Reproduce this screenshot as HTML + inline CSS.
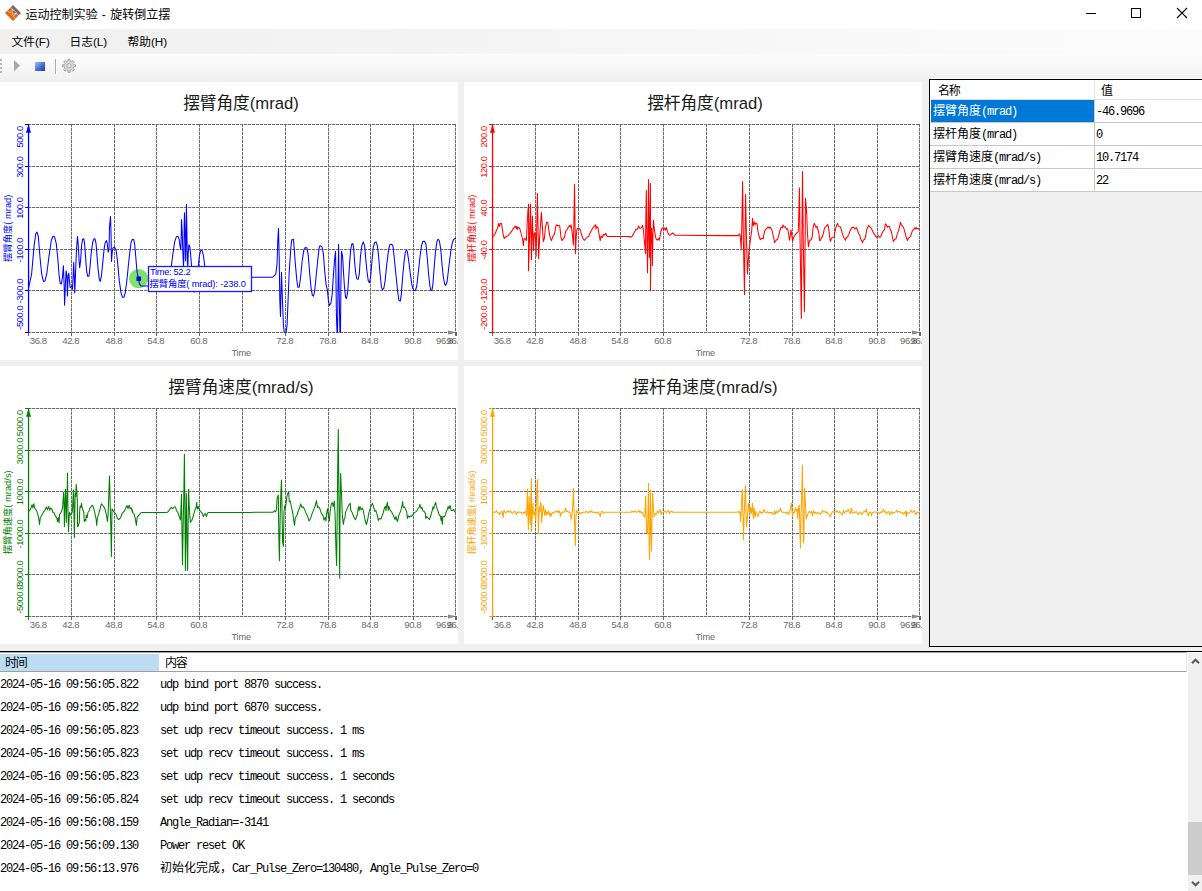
<!DOCTYPE html><html lang="zh-CN"><head><meta charset="utf-8"><title>运动控制实验 - 旋转倒立摆</title><style>
*{margin:0;padding:0;box-sizing:border-box}
html,body{width:1202px;height:891px;overflow:hidden;background:#f0f0f0;font-family:"Liberation Sans","Noto Sans CJK SC",sans-serif;font-size:12px;color:#000}
.abs{position:absolute}
#title{left:0;top:0;width:1202px;height:29px;background:#fff}
#title .t{left:25.5px;top:6.5px;font-size:12px;line-height:17px;white-space:nowrap;word-spacing:1px}
#menu{left:0;top:29px;width:1202px;height:25px;background:linear-gradient(to right,#f0f0f0,#f2f2f2 20%,#fcfcfc)}
#menu span{position:absolute;top:4px;margin-left:-0.5px;line-height:17px;font-size:11.7px;white-space:nowrap}
#tool{left:0;top:54px;width:1202px;height:26px;background:linear-gradient(#fdfdfd,#f9f9f9 35%,#f0f0f0)}
.chart{width:458px;height:278px;background:#fff;overflow:hidden}
.chart svg{position:absolute;left:0;top:0}
#right{left:929px;top:79px;width:280px;height:568px;border:1px solid #000;background:#f0f0f0}
.sim{font-family:"Liberation Mono","Noto Sans CJK SC",monospace;font-size:12px;letter-spacing:-1.2px;white-space:nowrap}
.sim .c{letter-spacing:0}
#rhead{left:0;top:0;width:280px;height:20px;background:#fff;border-bottom:1px solid #e0e0e0}
.rrow{left:0;width:280px;height:23px;background:#fff;border-bottom:1px solid #c8c8c8}
.rrow .a{position:absolute;left:1px;top:0;width:163px;height:22px;padding-left:2px;line-height:24px;overflow:hidden}
.rrow .b{position:absolute;left:166px;top:0;line-height:24px}
.rrow .v{position:absolute;left:164px;top:0;width:1px;height:23px;background:#c8c8c8}
#log{left:0;top:651px;width:1202px;height:240px;background:#fff;border-top:1px solid #000}
#lhead{left:0;top:0;width:1187px;height:20px;background:#fff;border-bottom:1px solid #a0a0a0;border-top:1px solid #a6a6a6;border-right:1px solid #e5e5e5}
.lrow{left:0;height:23px;line-height:23px}
.lrow span.t1{position:absolute;left:0px}
.lrow span.t2{position:absolute;left:160px}
#sb{left:1188px;top:1px;width:14px;height:239px;background:#f0f0f0}
</style></head><body>
<div id="title" class="abs">
<svg class="abs" style="left:0;top:0" width="26" height="26" viewBox="0 0 26 26">
<g transform="translate(13,13) rotate(45)">
<rect x="-5.66" y="-5.66" width="11.32" height="3.3" fill="#6e6e6e"/>
<rect x="-5.66" y="2.4" width="11.32" height="3.26" fill="#ea640c"/>
<rect x="-5.66" y="-2.1" width="3" height="4.1" fill="#ea640c"/>
<rect x="2.7" y="-2.1" width="2.96" height="4.1" fill="#ea640c"/>
<rect x="-2.2" y="-2.4" width="4.4" height="4.9" fill="#ea640c"/>
<path d="M-2.3 -2.5 H2.3 L0.3 1.8Z" fill="#6e6e6e" stroke="#e8f0f8" stroke-width=".5"/>
</g>
</svg>
<span class="abs t">运动控制实验 - 旋转倒立摆</span>
<svg class="abs" style="left:1080px;top:0" width="122" height="29" viewBox="0 0 122 29">
<path d="M6 13.5H16" stroke="#000" stroke-width="1" shape-rendering="crispEdges"/>
<rect x="51.5" y="8.5" width="9" height="9" fill="none" stroke="#000" stroke-width="1" shape-rendering="crispEdges"/>
<path d="M97 8L107 18M107 8L97 18" stroke="#000" stroke-width="1.1"/>
</svg>
</div>
<div id="menu" class="abs"><span style="left:12px">文件(F)</span><span style="left:70px">日志(L)</span><span style="left:128px">帮助(H)</span></div>
<div id="tool" class="abs">
<svg class="abs" style="left:0;top:0" width="90" height="26" viewBox="0 0 90 26">
<path d="M0 5h2v2H0zM0 9h2v2H0zM0 13h2v2H0zM0 17h2v2H0z" fill="#b5b5b5"/>
<path d="M14 6 L20 11.5 L14 17.5Z" fill="#a9a9a9"/>
<defs><linearGradient id="sq" x1="0" y1="0" x2="1" y2="1"><stop offset="0" stop-color="#a8c0f0"/><stop offset="0.6" stop-color="#3f66d0"/><stop offset="1" stop-color="#1d3fa8"/></linearGradient></defs>
<rect x="35" y="8" width="10" height="9" fill="url(#sq)"/>
<path d="M55.5 5V20" stroke="#adadad" stroke-width="1" shape-rendering="crispEdges"/><path d="M56.5 5V20" stroke="#fff" stroke-width="1" shape-rendering="crispEdges"/>
<g transform="translate(69,11.8)"><path d="M-1.11 -4.46 L-1.03 -6.52 L1.03 -6.52 L1.11 -4.46 L2.37 -3.94 L3.88 -5.34 L5.34 -3.88 L3.94 -2.37 L4.46 -1.11 L6.52 -1.03 L6.52 1.03 L4.46 1.11 L3.94 2.37 L5.34 3.88 L3.88 5.34 L2.37 3.94 L1.11 4.46 L1.03 6.52 L-1.03 6.52 L-1.11 4.46 L-2.37 3.94 L-3.88 5.34 L-5.34 3.88 L-3.94 2.37 L-4.46 1.11 L-6.52 1.03 L-6.52 -1.03 L-4.46 -1.11 L-3.94 -2.37 L-5.34 -3.88 L-3.88 -5.34 L-2.37 -3.94Z" fill="#dcdcdc" stroke="#a4a4a4" stroke-width="1" stroke-linejoin="round"/><circle r="2.2" fill="#e6e6e6" stroke="#a8a8a8" stroke-width="1"/></g>
</svg></div>
<div class="abs chart" style="left:0px;top:82px"><svg width="458" height="278" viewBox="0 0 458 278" font-family='Liberation Sans, Noto Sans CJK SC, sans-serif'>
<path d="M71.5 42 V251 M114.5 42 V251 M156.5 42 V251 M199.5 42 V251 M242.5 42 V251 M285.5 42 V251 M328.5 42 V251 M370.5 42 V251 M413.5 42 V251 M455.5 42 V251 M28 42.5 H456 M28 84.5 H456 M28 125.5 H456 M28 167.5 H456 M28 208.5 H456 M28 250.5 H456" stroke="#d4d4d4" stroke-width="1" fill="none" shape-rendering="crispEdges"/>
<path d="M71.5 42 V251 M114.5 42 V251 M156.5 42 V251 M199.5 42 V251 M242.5 42 V251 M285.5 42 V251 M328.5 42 V251 M370.5 42 V251 M413.5 42 V251 M455.5 42 V251 M28 42.5 H456 M28 84.5 H456 M28 125.5 H456 M28 167.5 H456 M28 208.5 H456 M28 250.5 H456" stroke="#6c6c6c" stroke-width="1" stroke-dasharray="3 1" fill="none" shape-rendering="crispEdges"/>
<path d="M28.5 250 V254 M71.5 250 V254 M114.5 250 V254 M156.5 250 V254 M199.5 250 V254 M285.5 250 V254 M328.5 250 V254 M370.5 250 V254 M413.5 250 V254 M455.5 250 V254" stroke="#666" stroke-width="1" fill="none" shape-rendering="crispEdges"/>
<path d="M448 248.4V252.6L450.6 252L454.6 251V250L450.6 249Z" fill="#8a8a8a"/><path d="M456.5 250V254" stroke="#666" stroke-width="1"/>
<circle cx="138.6" cy="196.6" r="9.6" fill="#7ee36b"/>
<polyline points="28.5,206.5 31.6,192.2 34.1,163.6 35.8,151.8 37.0,150.1 38.3,154.3 40.0,175.3 41.7,192.2 43.4,199.4 45.0,198.9 46.7,192.2 49.3,172.0 51.3,158.5 53.0,154.3 54.6,154.8 56.3,161.9 57.7,175.3 59.0,192.2 60.2,201.4 61.4,201.9 62.4,195.5 63.4,183.8 64.1,202.3 64.6,223.3 65.4,202.3 66.1,188.8 66.8,192.2 67.4,214.1 68.1,193.9 68.8,191.3 69.5,198.9 70.1,205.6 71.1,204.8 72.0,204.0 72.5,207.3 73.2,192.2 73.7,180.4 74.3,195.5 74.8,211.0 75.5,192.2 76.5,166.9 77.5,154.6 78.2,161.9 79.1,178.7 79.7,185.8 80.6,178.7 81.6,163.6 82.6,157.2 83.8,156.8 84.6,161.9 85.6,175.3 86.6,188.8 87.6,194.2 89.0,194.2 90.0,185.4 91.3,170.3 92.7,160.2 94.0,156.8 95.0,156.8 96.1,161.9 97.1,175.3 98.1,187.1 99.4,198.1 100.4,199.2 101.4,193.9 102.8,180.4 104.1,166.9 105.1,161.0 106.5,158.5 107.3,161.9 108.2,170.3 109.0,166.9 109.5,145.0 110.5,134.6 111.0,150.1 111.5,179.5 112.2,170.3 112.9,166.1 114.1,165.2 115.2,166.1 116.3,169.4 117.6,180.4 119.3,198.9 121.0,210.7 122.3,215.2 124.0,215.2 125.3,210.7 127.0,197.2 129.2,175.3 131.1,160.2 132.4,157.3 133.8,157.7 134.8,163.6 136.1,178.7 137.1,190.5 138.5,196.4 139.3,201.4 140.9,204.0 148.2,204.0 156.9,204.0 163.7,202.3 167.9,195.5 171.2,184.6 172.9,172.0 174.6,160.2 176.3,154.8 178.0,154.3 179.2,157.7 180.2,165.2 180.8,167.8 181.3,150.1 181.5,137.5 182.2,150.1 182.9,172.0 183.5,184.6 183.9,175.3 184.2,141.7 184.5,130.7 185.1,150.1 185.6,178.7 186.1,158.5 186.4,122.3 186.9,150.1 187.4,180.4 187.9,184.6 188.2,172.0 188.9,162.7 189.8,164.4 190.6,172.0 191.6,184.6 193.0,204.0 194.0,210.2 195.3,204.0 198.2,184.6 199.4,173.7 200.7,168.6 202.1,168.3 203.4,173.7 204.9,184.6 206.6,195.5 209.1,200.6 251.7,195.2 272.8,195.2 275.8,192.2 277.0,182.1 277.8,158.5 278.5,146.4 279.2,175.3 279.8,217.4 280.5,234.6 281.0,209.0 281.5,190.2 282.4,217.4 283.4,242.7 284.2,250.3 286.2,250.3 287.1,242.7 288.1,217.4 289.1,192.2 290.5,170.3 291.6,158.0 293.5,157.3 294.2,166.9 295.5,183.8 296.9,198.9 297.9,205.3 299.2,205.3 300.6,195.5 302.2,178.7 303.9,167.8 305.3,165.6 307.0,166.1 308.3,173.7 309.6,190.5 311.0,205.6 312.3,213.2 313.5,214.1 314.7,209.0 316.0,195.5 317.7,178.7 319.1,166.1 320.0,163.6 322.0,164.9 323.4,171.7 324.7,189.2 326.1,202.6 327.4,208.0 328.4,218.8 329.4,223.5 330.8,221.5 332.1,213.4 333.5,191.9 334.5,178.4 335.5,169.2 335.9,191.9 336.4,232.3 337.0,250.1 337.5,250.1 338.0,205.3 338.6,162.2 339.1,205.3 339.9,250.1 340.5,250.1 340.9,205.3 341.5,169.2 342.6,174.4 343.6,191.9 344.5,205.3 345.6,215.4 346.4,216.5 347.6,210.7 348.6,197.3 349.6,181.1 350.7,167.6 351.8,162.0 352.9,161.6 353.7,166.3 354.7,181.1 355.8,191.9 356.9,197.0 358.2,197.3 359.3,191.9 360.5,173.7 361.9,163.6 363.2,159.9 364.6,163.6 365.6,175.3 366.9,188.8 368.3,198.9 369.5,200.6 370.6,195.5 372.0,178.7 373.3,165.2 374.7,160.5 376.0,159.9 377.4,163.6 378.7,175.3 380.1,192.2 381.4,204.8 382.4,207.7 383.8,206.5 385.1,198.9 386.8,182.1 388.5,168.6 389.8,162.7 391.5,162.2 392.9,163.6 394.2,175.3 395.9,192.2 397.6,209.0 398.9,218.3 400.3,219.1 401.3,212.4 402.6,195.5 404.0,180.4 405.3,170.3 406.3,168.1 407.3,169.4 408.7,178.7 410.4,192.2 412.1,204.0 413.7,208.5 415.4,208.5 416.8,204.0 418.5,188.8 420.1,173.7 421.5,163.6 422.8,159.5 424.5,159.2 425.9,161.9 427.2,175.3 428.6,192.2 429.9,204.0 430.9,208.5 431.9,208.5 432.9,202.3 434.3,183.8 435.6,168.6 437.0,159.3 438.0,157.2 439.3,158.5 440.7,166.9 442.0,182.1 443.4,195.5 444.7,202.3 445.7,203.5 447.1,199.8 448.4,188.8 449.8,177.0 451.1,166.9 452.5,160.2 453.8,157.3 455.2,156.5 455.8,156.8" fill="none" stroke="#0000ff" stroke-width="1.05" stroke-linejoin="round"/>
<path d="M28.55 42V251" stroke="#0000ff" stroke-width="1.3" fill="none"/>
<path d="M25 42.5 H29 M25 84.5 H29 M25 125.5 H29 M25 167.5 H29 M25 208.5 H29 M25 250.5 H29" stroke="#0000ff" stroke-width="1" fill="none" shape-rendering="crispEdges"/>
<path d="M28.5 42.3 L31 50.8 H26Z" fill="#0000ff"/>
<text x="241" y="27.3" font-size="16.67" text-anchor="middle" fill="#1a1a1a">摆臂角度(mrad)</text>
<text x="38.2" y="262" font-size="9.5" text-anchor="middle" fill="#6a6a6a" letter-spacing="-0.4">36.8</text>
<text x="70.7" y="262" font-size="9.5" text-anchor="middle" fill="#6a6a6a" letter-spacing="-0.4">42.8</text>
<text x="113.7" y="262" font-size="9.5" text-anchor="middle" fill="#6a6a6a" letter-spacing="-0.4">48.8</text>
<text x="155.7" y="262" font-size="9.5" text-anchor="middle" fill="#6a6a6a" letter-spacing="-0.4">54.8</text>
<text x="198.7" y="262" font-size="9.5" text-anchor="middle" fill="#6a6a6a" letter-spacing="-0.4">60.8</text>
<text x="284.7" y="262" font-size="9.5" text-anchor="middle" fill="#6a6a6a" letter-spacing="-0.4">72.8</text>
<text x="327.7" y="262" font-size="9.5" text-anchor="middle" fill="#6a6a6a" letter-spacing="-0.4">78.8</text>
<text x="369.7" y="262" font-size="9.5" text-anchor="middle" fill="#6a6a6a" letter-spacing="-0.4">84.8</text>
<text x="412.7" y="262" font-size="9.5" text-anchor="middle" fill="#6a6a6a" letter-spacing="-0.4">90.8</text>
<text x="436" y="262" font-size="9.5" fill="#6a6a6a" letter-spacing="-0.4">96.8</text>
<text x="446.5" y="262" font-size="9.5" fill="#6a6a6a" letter-spacing="-0.4">96.8</text>
<text x="241.2" y="274" font-size="9.33" text-anchor="middle" fill="#6a6a6a" letter-spacing="-0.2">Time</text>
<text transform="translate(22.8,44.2) rotate(-90)" font-size="9.33" text-anchor="end" fill="#0000ff" letter-spacing="-0.4">500.0</text>
<text transform="translate(22.8,85.1) rotate(-90)" font-size="9.33" text-anchor="middle" fill="#0000ff" letter-spacing="-0.4">300.0</text>
<text transform="translate(22.8,126.1) rotate(-90)" font-size="9.33" text-anchor="middle" fill="#0000ff" letter-spacing="-0.4">100.0</text>
<text transform="translate(22.8,168.1) rotate(-90)" font-size="9.33" text-anchor="middle" fill="#0000ff" letter-spacing="-0.4">-100.0</text>
<text transform="translate(22.8,209.1) rotate(-90)" font-size="9.33" text-anchor="middle" fill="#0000ff" letter-spacing="-0.4">-300.0</text>
<text transform="translate(22.8,247.8) rotate(-90)" font-size="9.33" text-anchor="start" fill="#0000ff" letter-spacing="-0.4">-500.0</text>
<text transform="translate(11.4,146.3) rotate(-90)" font-size="9.33" text-anchor="middle" fill="#0000ff">摆臂角度( mrad)</text>
<rect x="136.5" y="194.5" width="4.5" height="4.5" fill="#0000e0"/>
<rect x="148.5" y="184.5" width="103" height="25" fill="#fff" stroke="#1a1aff" stroke-width="1.3"/>
<text x="150" y="192.8" font-size="9.33" fill="#0000ff" letter-spacing="-0.35">Time: 52.2</text>
<text x="149.6" y="204.6" font-size="9.33" fill="#0000ff" letter-spacing="-0.15">摆臂角度( mrad): -238.0</text>
</svg></div>
<div class="abs chart" style="left:464px;top:82px"><svg width="458" height="278" viewBox="0 0 458 278" font-family='Liberation Sans, Noto Sans CJK SC, sans-serif'>
<path d="M71.5 42 V251 M114.5 42 V251 M156.5 42 V251 M199.5 42 V251 M242.5 42 V251 M285.5 42 V251 M328.5 42 V251 M370.5 42 V251 M413.5 42 V251 M455.5 42 V251 M28 42.5 H456 M28 84.5 H456 M28 125.5 H456 M28 167.5 H456 M28 208.5 H456 M28 250.5 H456" stroke="#d4d4d4" stroke-width="1" fill="none" shape-rendering="crispEdges"/>
<path d="M71.5 42 V251 M114.5 42 V251 M156.5 42 V251 M199.5 42 V251 M242.5 42 V251 M285.5 42 V251 M328.5 42 V251 M370.5 42 V251 M413.5 42 V251 M455.5 42 V251 M28 42.5 H456 M28 84.5 H456 M28 125.5 H456 M28 167.5 H456 M28 208.5 H456 M28 250.5 H456" stroke="#6c6c6c" stroke-width="1" stroke-dasharray="3 1" fill="none" shape-rendering="crispEdges"/>
<path d="M28.5 250 V254 M71.5 250 V254 M114.5 250 V254 M156.5 250 V254 M199.5 250 V254 M285.5 250 V254 M328.5 250 V254 M370.5 250 V254 M413.5 250 V254 M455.5 250 V254" stroke="#666" stroke-width="1" fill="none" shape-rendering="crispEdges"/>
<path d="M448 248.4V252.6L450.6 252L454.6 251V250L450.6 249Z" fill="#8a8a8a"/><path d="M456.5 250V254" stroke="#666" stroke-width="1"/>

<polyline points="28.5,155.0 30.7,152.8 32.4,148.6 33.8,145.2 34.6,141.5 35.4,144.4 36.1,141.5 37.5,141.5 38.3,146.9 39.2,152.8 40.3,156.5 41.7,155.0 42.9,154.0 44.2,153.7 45.4,152.0 46.7,150.6 47.9,148.9 49.3,146.6 50.6,144.9 51.8,144.4 53.0,146.9 54.3,145.6 51.0,144.2 52.1,145.7 53.2,147.4 54.1,145.7 55.3,145.7 56.4,148.5 57.5,153.0 58.6,157.5 59.4,163.7 60.0,156.9 60.9,156.4 61.7,157.5 62.4,158.6 63.1,142.9 63.9,129.4 64.6,122.1 64.6,154.1 64.5,188.7 65.6,154.1 66.5,122.1 67.0,154.1 67.5,177.7 67.9,154.1 68.4,134.1 69.0,154.1 69.5,168.7 70.0,156.4 70.3,150.7 71.2,151.9 71.7,160.9 72.1,174.3 72.8,142.9 73.4,111.2 74.0,142.9 74.6,176.6 75.7,154.1 77.4,130.3 78.4,145.1 79.3,159.5 80.4,156.4 81.5,145.1 82.6,140.6 83.8,140.4 84.4,145.1 85.2,150.7 86.4,156.4 87.5,158.6 88.6,155.2 89.7,153.0 90.5,151.9 91.4,146.3 92.3,142.9 93.1,142.7 93.9,144.0 94.8,143.5 95.7,143.8 96.5,150.7 97.0,155.8 98.1,158.6 99.3,156.4 100.4,155.8 101.3,150.7 102.1,148.5 103.2,147.4 104.3,145.1 105.4,143.5 106.3,145.1 107.1,142.9 107.7,147.4 108.5,154.1 109.4,162.9 109.8,142.9 110.3,114.8 110.5,102.3 111.0,138.5 111.5,171.7 112.2,155.3 112.9,146.9 114.9,146.1 116.3,147.8 117.6,152.8 118.9,156.2 120.3,158.4 121.6,157.0 123.3,155.0 124.7,154.5 126.0,151.1 127.4,148.6 128.7,146.1 130.1,144.4 131.7,142.7 132.0,147.1 132.8,144.6 134.0,145.8 135.0,152.2 136.2,158.6 137.1,153.9 138.4,155.5 139.6,152.2 140.8,153.0 141.8,151.3 142.9,154.2 144.6,154.5 165.7,154.5 166.0,155.3 168.2,154.3 170.1,150.7 171.8,147.5 173.6,147.0 174.5,144.1 175.5,146.0 176.5,146.3 177.7,145.1 178.4,143.4 179.4,147.8 180.3,158.0 181.5,171.4 181.7,146.3 182.3,108.4 182.9,153.6 183.5,190.8 184.1,146.3 184.5,97.5 185.0,146.3 185.4,175.5 186.0,131.7 186.4,101.4 186.6,160.9 186.4,208.7 187.0,160.9 187.6,146.3 188.2,163.8 188.4,183.5 188.9,153.6 189.5,138.3 190.2,146.3 191.1,152.1 191.9,156.5 193.1,158.3 194.3,156.5 195.2,158.4 195.9,155.1 196.9,149.2 198.1,146.0 198.9,145.6 199.8,147.8 200.7,146.0 201.6,148.1 202.4,145.6 203.3,149.2 204.5,152.1 205.7,153.3 207.1,152.1 208.6,151.0 209.7,151.8 211.2,153.3 216.0,153.3 261.0,153.6 274.4,153.6 275.5,152.0 276.3,154.3 277.2,167.3 277.8,144.8 278.6,99.4 279.3,154.3 280.5,212.5 281.0,154.3 281.6,112.4 282.4,154.3 283.5,191.9 284.9,169.6 286.4,158.2 287.7,148.6 288.5,136.2 289.2,143.8 290.0,140.0 291.0,142.9 291.9,141.0 293.1,141.9 293.8,148.6 295.0,154.0 296.3,157.8 297.6,156.2 299.2,156.6 300.1,151.5 301.1,148.2 302.6,146.3 304.1,144.8 305.3,146.3 306.4,145.2 307.8,147.7 308.7,151.5 309.7,156.2 310.6,160.4 312.1,158.2 313.7,157.2 314.8,153.4 316.0,148.2 317.1,145.2 318.3,145.7 319.0,142.9 320.2,145.2 321.3,144.8 322.5,147.1 323.6,146.7 324.5,151.5 325.5,158.2 326.3,153.4 327.0,147.7 327.8,153.4 328.6,159.1 329.7,155.3 331.2,152.8 332.8,150.9 334.3,149.6 335.0,125.7 335.4,105.7 336.0,154.3 336.8,202.0 337.3,236.4 337.9,154.3 338.5,89.5 339.2,154.3 340.4,229.7 341.0,173.4 341.5,116.2 342.7,131.4 343.4,150.5 344.4,164.8 345.4,159.1 346.0,158.5 347.2,157.5 348.2,155.0 349.0,146.4 350.2,141.3 351.3,143.4 352.1,145.4 353.1,144.4 354.1,148.4 354.9,151.4 355.6,158.5 356.6,158.3 357.3,155.5 358.3,155.0 359.3,151.4 360.6,145.9 362.2,144.4 363.7,142.5 364.7,146.4 365.7,155.5 366.4,159.5 367.4,156.5 368.4,155.3 370.0,155.0 371.3,148.4 372.5,143.4 373.5,141.3 374.5,144.2 376.1,144.4 377.3,147.4 378.5,152.4 380.1,156.0 381.4,158.3 382.4,155.5 383.6,154.7 384.9,152.4 386.4,147.9 387.9,145.6 389.4,145.2 390.9,146.9 392.3,145.6 393.5,147.9 394.5,151.4 395.7,152.9 396.5,156.5 397.5,158.5 398.5,160.5 399.5,158.0 400.7,157.3 401.8,153.5 402.6,148.4 403.6,145.4 404.6,143.4 405.8,144.9 407.1,145.9 408.6,148.9 410.1,151.9 411.7,154.5 412.9,155.5 414.2,153.5 415.7,155.3 416.7,155.0 417.9,151.4 419.2,148.9 420.5,147.9 421.3,141.8 422.3,142.8 423.3,145.2 424.3,144.2 425.6,144.6 426.3,147.9 427.3,149.4 428.3,154.5 429.3,159.5 430.6,157.5 431.7,157.0 432.4,155.5 433.1,152.4 434.4,149.4 435.4,145.4 436.4,140.3 437.4,142.8 438.4,144.4 439.4,144.9 440.4,148.4 441.5,152.9 442.5,156.0 443.5,158.5 444.5,156.0 445.5,155.5 446.5,154.5 447.5,151.4 448.5,148.4 449.5,147.9 450.5,145.9 451.3,146.9 452.1,145.6 453.1,146.9 454.1,146.4 455.1,147.4 455.6,146.9" fill="none" stroke="#ff0000" stroke-width="1.05" stroke-linejoin="round"/>
<path d="M28.55 42V251" stroke="#ff0000" stroke-width="1.3" fill="none"/>
<path d="M25 42.5 H29 M25 84.5 H29 M25 125.5 H29 M25 167.5 H29 M25 208.5 H29 M25 250.5 H29" stroke="#ff0000" stroke-width="1" fill="none" shape-rendering="crispEdges"/>
<path d="M28.5 42.3 L31 50.8 H26Z" fill="#ff0000"/>
<text x="241" y="27.3" font-size="16.67" text-anchor="middle" fill="#1a1a1a">摆杆角度(mrad)</text>
<text x="38.2" y="262" font-size="9.5" text-anchor="middle" fill="#6a6a6a" letter-spacing="-0.4">36.8</text>
<text x="70.7" y="262" font-size="9.5" text-anchor="middle" fill="#6a6a6a" letter-spacing="-0.4">42.8</text>
<text x="113.7" y="262" font-size="9.5" text-anchor="middle" fill="#6a6a6a" letter-spacing="-0.4">48.8</text>
<text x="155.7" y="262" font-size="9.5" text-anchor="middle" fill="#6a6a6a" letter-spacing="-0.4">54.8</text>
<text x="198.7" y="262" font-size="9.5" text-anchor="middle" fill="#6a6a6a" letter-spacing="-0.4">60.8</text>
<text x="284.7" y="262" font-size="9.5" text-anchor="middle" fill="#6a6a6a" letter-spacing="-0.4">72.8</text>
<text x="327.7" y="262" font-size="9.5" text-anchor="middle" fill="#6a6a6a" letter-spacing="-0.4">78.8</text>
<text x="369.7" y="262" font-size="9.5" text-anchor="middle" fill="#6a6a6a" letter-spacing="-0.4">84.8</text>
<text x="412.7" y="262" font-size="9.5" text-anchor="middle" fill="#6a6a6a" letter-spacing="-0.4">90.8</text>
<text x="436" y="262" font-size="9.5" fill="#6a6a6a" letter-spacing="-0.4">96.8</text>
<text x="446.5" y="262" font-size="9.5" fill="#6a6a6a" letter-spacing="-0.4">96.8</text>
<text x="241.2" y="274" font-size="9.33" text-anchor="middle" fill="#6a6a6a" letter-spacing="-0.2">Time</text>
<text transform="translate(22.8,44.2) rotate(-90)" font-size="9.33" text-anchor="end" fill="#ff0000" letter-spacing="-0.4">200.0</text>
<text transform="translate(22.8,85.1) rotate(-90)" font-size="9.33" text-anchor="middle" fill="#ff0000" letter-spacing="-0.4">120.0</text>
<text transform="translate(22.8,126.1) rotate(-90)" font-size="9.33" text-anchor="middle" fill="#ff0000" letter-spacing="-0.4">40.0</text>
<text transform="translate(22.8,168.1) rotate(-90)" font-size="9.33" text-anchor="middle" fill="#ff0000" letter-spacing="-0.4">-40.0</text>
<text transform="translate(22.8,209.1) rotate(-90)" font-size="9.33" text-anchor="middle" fill="#ff0000" letter-spacing="-0.4">-120.0</text>
<text transform="translate(22.8,247.8) rotate(-90)" font-size="9.33" text-anchor="start" fill="#ff0000" letter-spacing="-0.4">-200.0</text>
<text transform="translate(11.4,146.3) rotate(-90)" font-size="9.33" text-anchor="middle" fill="#ff0000">摆杆角度( mrad)</text>

</svg></div>
<div class="abs chart" style="left:0px;top:366px"><svg width="458" height="278" viewBox="0 0 458 278" font-family='Liberation Sans, Noto Sans CJK SC, sans-serif'>
<path d="M71.5 42 V251 M114.5 42 V251 M156.5 42 V251 M199.5 42 V251 M242.5 42 V251 M285.5 42 V251 M328.5 42 V251 M370.5 42 V251 M413.5 42 V251 M455.5 42 V251 M28 42.5 H456 M28 84.5 H456 M28 125.5 H456 M28 167.5 H456 M28 208.5 H456 M28 250.5 H456" stroke="#d4d4d4" stroke-width="1" fill="none" shape-rendering="crispEdges"/>
<path d="M71.5 42 V251 M114.5 42 V251 M156.5 42 V251 M199.5 42 V251 M242.5 42 V251 M285.5 42 V251 M328.5 42 V251 M370.5 42 V251 M413.5 42 V251 M455.5 42 V251 M28 42.5 H456 M28 84.5 H456 M28 125.5 H456 M28 167.5 H456 M28 208.5 H456 M28 250.5 H456" stroke="#6c6c6c" stroke-width="1" stroke-dasharray="3 1" fill="none" shape-rendering="crispEdges"/>
<path d="M28.5 250 V254 M71.5 250 V254 M114.5 250 V254 M156.5 250 V254 M199.5 250 V254 M285.5 250 V254 M328.5 250 V254 M370.5 250 V254 M413.5 250 V254 M455.5 250 V254" stroke="#666" stroke-width="1" fill="none" shape-rendering="crispEdges"/>
<path d="M448 248.4V252.6L450.6 252L454.6 251V250L450.6 249Z" fill="#8a8a8a"/><path d="M456.5 250V254" stroke="#666" stroke-width="1"/>

<polyline points="28.5,145.4 30.4,143.7 32.1,138.7 32.8,142.0 33.8,137.8 34.8,142.5 36.1,143.7 37.5,147.1 38.5,151.3 39.5,158.4 40.2,152.1 41.7,149.6 43.4,146.2 45.0,144.2 46.4,140.9 47.6,143.7 48.7,140.3 49.8,144.2 50.9,142.0 52.0,143.5 53.0,146.5 54.2,147.0 55.5,150.1 56.8,152.1 57.6,155.6 58.3,151.6 59.1,156.6 59.6,148.5 60.9,146.5 61.9,144.0 62.6,141.5 63.1,134.4 63.6,126.3 64.1,139.5 64.4,160.7 64.9,139.5 65.5,123.3 65.9,139.5 66.3,156.6 66.8,134.4 67.3,119.3 67.5,107.1 67.8,134.4 68.2,154.6 68.5,165.7 69.0,154.6 69.4,146.5 70.2,149.1 71.2,147.5 72.2,146.5 72.7,139.5 73.2,129.4 73.5,124.1 73.9,144.5 74.4,171.8 74.8,144.5 75.2,127.3 75.8,130.4 76.2,118.2 76.8,124.3 77.3,134.4 77.6,160.7 78.5,159.2 79.3,156.6 79.7,144.5 80.1,140.0 80.8,141.5 81.5,137.4 82.1,141.5 82.8,143.5 83.8,146.5 84.3,155.6 85.1,153.6 85.8,154.6 86.3,149.1 87.2,151.6 87.9,146.5 88.9,145.5 89.6,142.5 90.4,141.5 91.4,140.0 92.0,139.3 92.4,139.2 93.4,141.5 94.7,146.2 96.1,153.0 96.7,159.4 97.4,152.1 98.7,147.9 100.1,142.9 101.4,137.8 102.8,139.8 104.1,141.2 105.5,144.6 106.5,149.6 107.5,155.5 108.2,146.2 109.0,122.7 109.5,110.0 110.2,139.5 110.9,164.8 111.4,190.5 111.7,164.8 112.0,142.9 113.2,144.6 114.6,147.1 115.9,147.9 117.3,152.1 118.6,153.8 119.6,152.6 120.8,151.3 121.6,148.3 123.3,146.2 124.7,144.6 126.0,141.5 127.0,139.5 128.0,142.5 129.1,139.2 130.1,142.5 131.4,142.0 132.8,145.4 131.3,142.7 132.5,146.4 134.2,148.1 135.4,153.1 136.4,159.5 137.1,151.4 138.4,149.8 139.8,148.1 140.9,146.7 142.6,146.4 167.0,146.4 168.4,145.5 169.7,143.4 171.4,141.3 172.8,142.7 174.1,141.0 175.5,141.0 176.5,144.7 177.8,146.4 179.2,150.6 180.5,154.0 181.0,141.3 181.5,128.2 182.0,166.6 182.5,198.6 183.2,158.2 183.9,124.5 184.4,88.3 184.9,141.3 185.4,204.5 185.9,158.2 186.4,127.5 186.9,166.6 187.6,204.5 188.1,158.2 188.6,123.3 189.3,141.3 190.3,156.5 191.6,154.8 192.6,152.3 194.0,147.2 195.3,143.0 196.2,141.3 196.7,136.3 197.3,143.0 198.4,140.5 199.4,143.9 200.7,145.5 202.1,147.2 203.4,150.6 204.4,148.1 205.4,147.7 206.4,150.6 207.4,147.2 208.8,146.4 250.0,146.4 255.0,146.3 273.1,146.3 274.4,144.6 275.6,145.9 276.4,143.6 277.1,132.2 278.3,129.3 278.8,168.4 279.4,194.7 280.2,149.3 280.9,126.4 281.5,114.1 282.1,149.3 282.6,176.0 283.4,180.4 284.0,145.5 284.7,139.8 285.5,141.7 286.3,136.0 287.0,130.3 287.8,127.4 288.7,126.1 289.3,136.0 290.3,135.0 291.2,139.8 292.8,147.4 293.7,154.1 294.5,159.4 295.4,151.2 296.6,150.3 298.1,145.5 299.6,141.7 300.8,137.9 301.9,141.7 303.0,140.7 304.6,143.6 306.1,147.4 307.6,150.3 309.1,155.0 310.7,152.2 312.2,147.4 313.7,143.6 315.2,139.8 316.4,134.5 317.5,141.7 318.7,140.7 320.2,143.6 321.3,147.4 322.9,149.3 324.0,154.1 325.2,151.2 325.9,155.0 326.7,147.4 327.4,142.7 328.4,149.3 329.4,155.0 330.1,145.5 331.3,137.9 332.4,136.9 333.2,140.7 334.3,135.0 335.1,149.3 335.8,177.9 336.6,199.5 337.2,149.3 337.7,101.7 338.3,63.2 338.9,130.3 339.7,212.2 340.0,149.3 340.6,107.4 341.6,130.3 342.3,149.3 343.3,158.5 344.2,153.1 345.0,151.5 345.5,146.4 347.0,142.9 348.5,139.4 350.3,137.3 350.6,143.4 352.1,146.4 353.6,150.5 355.3,153.7 356.6,151.0 357.6,147.4 358.4,140.9 359.1,144.4 359.9,140.4 361.0,143.9 362.2,141.9 363.2,144.4 364.2,149.5 365.2,154.5 366.4,158.5 367.7,153.5 369.0,146.4 370.3,142.4 371.5,139.4 372.5,137.3 373.8,141.4 374.8,145.4 375.8,144.4 377.1,148.4 378.3,154.5 379.3,152.5 380.9,153.0 382.2,149.5 383.4,146.4 384.4,141.9 385.4,140.4 385.9,144.4 386.9,138.3 387.4,136.3 388.2,144.4 388.9,140.4 389.9,143.9 391.3,145.4 392.5,147.4 394.0,151.0 395.0,153.5 396.0,150.5 397.3,155.5 398.0,153.5 398.7,149.5 400.1,146.4 401.1,143.4 402.1,139.4 402.6,135.5 403.3,141.4 404.6,140.9 405.6,143.4 406.8,146.4 407.4,152.5 408.1,150.0 409.4,151.0 410.5,150.0 411.7,150.5 412.9,148.4 414.2,146.9 415.7,145.9 416.9,144.9 417.9,142.4 418.9,141.9 419.9,138.3 421.0,142.4 422.0,141.4 423.0,144.9 424.3,145.4 425.3,147.4 425.8,152.5 426.8,150.5 428.0,152.0 429.3,153.5 430.4,151.0 431.4,147.4 432.4,143.9 432.9,140.9 433.7,142.9 434.4,139.9 435.6,136.3 436.4,140.4 437.4,143.4 438.4,146.4 439.4,149.5 440.5,150.0 441.0,154.5 441.5,150.5 442.3,158.5 442.8,150.5 444.5,150.7 445.5,148.4 446.5,145.4 447.5,142.9 448.2,140.4 449.0,142.9 450.1,139.4 451.1,144.4 452.6,144.4 453.6,143.4 454.6,145.4 455.6,146.4" fill="none" stroke="#008000" stroke-width="1.05" stroke-linejoin="round"/>
<path d="M28.55 42V251" stroke="#008000" stroke-width="1.3" fill="none"/>
<path d="M25 42.5 H29 M25 84.5 H29 M25 125.5 H29 M25 167.5 H29 M25 208.5 H29 M25 250.5 H29" stroke="#008000" stroke-width="1" fill="none" shape-rendering="crispEdges"/>
<path d="M28.5 42.3 L31 50.8 H26Z" fill="#008000"/>
<text x="241" y="27.3" font-size="16.67" text-anchor="middle" fill="#1a1a1a">摆臂角速度(mrad/s)</text>
<text x="38.2" y="262" font-size="9.5" text-anchor="middle" fill="#6a6a6a" letter-spacing="-0.4">36.8</text>
<text x="70.7" y="262" font-size="9.5" text-anchor="middle" fill="#6a6a6a" letter-spacing="-0.4">42.8</text>
<text x="113.7" y="262" font-size="9.5" text-anchor="middle" fill="#6a6a6a" letter-spacing="-0.4">48.8</text>
<text x="155.7" y="262" font-size="9.5" text-anchor="middle" fill="#6a6a6a" letter-spacing="-0.4">54.8</text>
<text x="198.7" y="262" font-size="9.5" text-anchor="middle" fill="#6a6a6a" letter-spacing="-0.4">60.8</text>
<text x="284.7" y="262" font-size="9.5" text-anchor="middle" fill="#6a6a6a" letter-spacing="-0.4">72.8</text>
<text x="327.7" y="262" font-size="9.5" text-anchor="middle" fill="#6a6a6a" letter-spacing="-0.4">78.8</text>
<text x="369.7" y="262" font-size="9.5" text-anchor="middle" fill="#6a6a6a" letter-spacing="-0.4">84.8</text>
<text x="412.7" y="262" font-size="9.5" text-anchor="middle" fill="#6a6a6a" letter-spacing="-0.4">90.8</text>
<text x="436" y="262" font-size="9.5" fill="#6a6a6a" letter-spacing="-0.4">96.8</text>
<text x="446.5" y="262" font-size="9.5" fill="#6a6a6a" letter-spacing="-0.4">96.8</text>
<text x="241.2" y="274" font-size="9.33" text-anchor="middle" fill="#6a6a6a" letter-spacing="-0.2">Time</text>
<text transform="translate(22.8,44.2) rotate(-90)" font-size="9.33" text-anchor="end" fill="#008000" letter-spacing="-0.4">5000.0</text>
<text transform="translate(22.8,85.1) rotate(-90)" font-size="9.33" text-anchor="middle" fill="#008000" letter-spacing="-0.4">3000.0</text>
<text transform="translate(22.8,126.1) rotate(-90)" font-size="9.33" text-anchor="middle" fill="#008000" letter-spacing="-0.4">1000.0</text>
<text transform="translate(22.8,168.1) rotate(-90)" font-size="9.33" text-anchor="middle" fill="#008000" letter-spacing="-0.4">-1000.0</text>
<text transform="translate(22.8,209.1) rotate(-90)" font-size="9.33" text-anchor="middle" fill="#008000" letter-spacing="-0.4">-3000.0</text>
<text transform="translate(22.8,247.8) rotate(-90)" font-size="9.33" text-anchor="start" fill="#008000" letter-spacing="-0.4">-5000.0</text>
<text transform="translate(11.4,146.3) rotate(-90)" font-size="9.33" text-anchor="middle" fill="#008000">摆臂角速度( mrad/s)</text>

</svg></div>
<div class="abs chart" style="left:464px;top:366px"><svg width="458" height="278" viewBox="0 0 458 278" font-family='Liberation Sans, Noto Sans CJK SC, sans-serif'>
<path d="M71.5 42 V251 M114.5 42 V251 M156.5 42 V251 M199.5 42 V251 M242.5 42 V251 M285.5 42 V251 M328.5 42 V251 M370.5 42 V251 M413.5 42 V251 M455.5 42 V251 M28 42.5 H456 M28 84.5 H456 M28 125.5 H456 M28 167.5 H456 M28 208.5 H456 M28 250.5 H456" stroke="#d4d4d4" stroke-width="1" fill="none" shape-rendering="crispEdges"/>
<path d="M71.5 42 V251 M114.5 42 V251 M156.5 42 V251 M199.5 42 V251 M242.5 42 V251 M285.5 42 V251 M328.5 42 V251 M370.5 42 V251 M413.5 42 V251 M455.5 42 V251 M28 42.5 H456 M28 84.5 H456 M28 125.5 H456 M28 167.5 H456 M28 208.5 H456 M28 250.5 H456" stroke="#6c6c6c" stroke-width="1" stroke-dasharray="3 1" fill="none" shape-rendering="crispEdges"/>
<path d="M28.5 250 V254 M71.5 250 V254 M114.5 250 V254 M156.5 250 V254 M199.5 250 V254 M285.5 250 V254 M328.5 250 V254 M370.5 250 V254 M413.5 250 V254 M455.5 250 V254" stroke="#666" stroke-width="1" fill="none" shape-rendering="crispEdges"/>
<path d="M448 248.4V252.6L450.6 252L454.6 251V250L450.6 249Z" fill="#8a8a8a"/><path d="M456.5 250V254" stroke="#666" stroke-width="1"/>

<polyline points="28.7,146.3 31.4,146.3 32.4,144.5 33.4,146.5 34.5,146.8 35.6,148.5 36.8,146.5 37.5,145.2 38.3,146.5 39.1,151.6 39.9,144.5 41.0,146.3 42.0,146.8 43.1,145.4 44.2,145.2 45.3,146.5 46.4,144.5 47.4,146.5 48.5,147.2 49.6,145.9 50.7,145.2 51.6,146.8 52.6,148.5 53.4,145.9 54.7,146.5 55.8,145.9 56.9,146.8 57.9,146.5 59.0,147.9 59.8,145.9 61.0,146.5 62.0,145.2 62.5,149.9 63.1,134.4 63.5,123.0 63.9,147.9 64.4,163.8 64.8,145.2 65.2,130.4 65.8,147.9 66.3,158.6 66.8,134.4 67.4,112.2 67.6,147.9 67.4,165.4 68.2,150.6 69.0,137.1 69.5,147.9 70.3,149.2 71.1,145.2 71.8,154.6 72.5,134.4 73.0,120.9 73.6,113.5 74.1,147.9 74.5,167.4 74.9,147.9 75.4,141.1 76.0,145.2 76.5,136.4 77.2,138.4 77.6,156.6 78.4,147.9 78.9,142.5 79.5,139.5 80.0,145.2 80.6,149.2 81.4,143.8 82.2,149.2 83.0,145.9 83.8,147.9 84.6,145.2 85.4,149.2 86.2,147.2 87.0,150.6 87.8,147.6 88.6,146.3 89.7,147.2 90.8,145.9 91.9,145.2 93.0,146.3 94.0,144.5 94.8,146.5 95.6,145.2 96.5,150.3 97.5,146.5 98.6,145.9 99.7,146.5 100.8,145.2 101.6,142.2 102.4,145.9 103.5,145.2 104.5,146.3 105.6,145.9 106.4,147.9 107.2,153.3 108.0,147.9 108.6,142.5 109.0,134.4 109.4,122.3 109.9,141.1 110.5,154.6 111.0,169.4 111.4,179.5 111.8,154.6 112.4,144.1 113.4,145.9 114.5,147.2 115.6,146.5 116.7,147.9 117.7,146.3 118.8,146.8 119.9,145.9 121.0,146.5 122.0,145.4 123.1,145.9 124.2,146.8 125.3,145.2 126.4,146.5 127.4,144.9 128.5,146.5 129.6,145.9 130.7,146.8 132.0,146.3 133.3,147.2 134.4,145.9 135.4,147.9 136.3,150.6 137.1,145.9 138.2,145.2 139.3,146.8 140.4,147.2 141.4,146.3 167.0,146.3 168.1,145.2 169.2,146.3 170.2,145.4 171.3,145.2 172.4,146.5 173.5,145.9 174.6,144.5 175.4,146.3 176.2,144.9 177.3,147.2 178.3,145.9 179.1,147.9 179.9,149.9 180.8,151.2 181.2,141.1 181.6,130.1 182.1,147.9 182.6,166.7 183.4,167.8 184.0,147.9 184.5,117.2 184.9,161.3 185.5,193.7 186.0,161.3 186.4,124.3 186.9,161.3 187.5,184.9 188.0,154.6 188.6,127.4 189.2,138.4 189.9,150.6 190.7,149.2 191.5,147.2 192.6,147.9 193.4,144.9 194.2,146.5 195.3,145.9 196.4,143.6 197.2,148.5 198.0,145.9 199.1,146.8 200.1,145.9 201.2,145.2 202.3,146.5 203.4,145.9 204.5,144.5 205.5,147.6 206.6,145.9 207.7,145.2 208.8,146.3 252.0,146.3 261.0,146.2 273.1,146.2 274.2,145.3 275.3,146.6 276.1,146.0 276.5,155.6 277.2,144.6 277.8,131.1 278.5,124.1 278.9,151.3 279.5,173.6 280.1,151.3 280.9,131.1 281.5,119.3 282.0,144.6 282.5,160.8 283.4,151.3 284.2,139.2 284.7,137.2 285.2,143.3 285.9,148.6 286.6,141.2 287.3,147.3 287.9,143.3 288.5,137.2 289.0,147.3 289.4,152.7 290.0,141.9 290.6,147.3 291.2,151.3 291.7,145.3 292.5,147.3 293.3,148.6 294.1,150.7 294.9,147.3 296.0,144.9 296.8,147.3 297.6,146.2 298.7,147.0 299.5,145.3 300.3,143.3 301.1,146.2 302.2,146.6 303.3,145.7 304.4,147.3 305.4,146.2 306.5,147.0 307.6,146.2 308.7,148.6 309.8,147.0 310.6,144.9 311.4,148.4 312.2,145.3 313.3,147.0 314.3,144.6 315.4,145.3 316.5,142.2 317.6,146.0 318.9,146.2 320.3,146.2 321.6,146.6 322.7,147.3 323.5,145.7 324.3,148.4 325.1,147.3 325.9,145.3 326.7,140.6 327.4,137.2 327.9,143.3 328.5,150.7 329.1,146.0 330.0,147.3 330.8,143.3 331.6,141.9 332.4,145.3 333.2,143.3 333.7,152.7 334.4,143.3 335.3,139.2 335.9,164.8 336.4,181.9 337.0,151.3 337.8,124.4 338.4,99.1 338.8,137.9 339.4,176.9 339.9,172.9 340.5,122.4 341.3,135.2 341.8,144.6 342.3,153.0 343.2,150.0 344.2,147.3 345.3,145.3 346.4,146.6 347.5,145.3 348.5,149.7 349.4,144.6 350.2,147.0 351.2,146.0 352.3,148.0 353.4,146.2 354.5,147.3 355.5,147.0 356.6,148.4 357.4,146.6 358.5,144.6 359.6,146.2 360.7,145.3 361.7,147.0 362.8,145.7 363.9,147.3 365.0,148.4 366.0,150.8 367.2,148.8 368.4,145.6 369.6,146.0 370.7,145.6 371.9,146.0 373.1,144.4 374.3,146.8 375.5,145.6 376.7,146.8 378.3,148.8 379.4,144.4 380.6,147.2 381.8,145.2 383.0,145.6 384.3,143.2 385.4,146.0 386.4,147.6 387.3,142.1 388.5,147.2 389.7,146.0 390.9,146.8 392.1,145.2 393.3,147.2 394.5,148.6 395.6,146.0 396.8,146.8 398.0,148.6 399.2,146.4 400.4,145.2 401.6,146.0 402.4,143.2 403.3,147.2 404.3,149.7 405.5,146.4 406.7,146.0 407.5,149.7 408.3,146.4 409.5,146.4 410.7,145.6 411.8,146.3 413.4,146.4 414.6,146.3 415.6,147.6 416.6,146.0 417.8,146.4 418.8,144.8 419.6,143.4 420.5,146.0 421.3,145.6 422.5,147.6 423.7,146.0 424.9,145.6 425.7,148.8 426.7,147.2 427.5,145.6 428.5,147.6 429.6,146.3 430.8,146.4 432.0,145.6 432.8,144.4 433.6,146.4 434.8,145.2 436.0,146.0 437.1,147.2 438.3,146.4 439.5,148.0 440.7,147.2 441.5,145.2 442.3,150.8 442.8,145.6 443.9,147.6 445.1,147.2 446.2,146.0 447.4,144.4 448.2,146.4 449.4,145.6 450.4,144.4 451.2,147.6 452.2,148.4 453.0,146.0 454.1,146.4 455.7,146.3" fill="none" stroke="#ffa500" stroke-width="1.05" stroke-linejoin="round"/>
<path d="M28.55 42V251" stroke="#ffa500" stroke-width="1.3" fill="none"/>
<path d="M25 42.5 H29 M25 84.5 H29 M25 125.5 H29 M25 167.5 H29 M25 208.5 H29 M25 250.5 H29" stroke="#ffa500" stroke-width="1" fill="none" shape-rendering="crispEdges"/>
<path d="M28.5 42.3 L31 50.8 H26Z" fill="#ffa500"/>
<text x="241" y="27.3" font-size="16.67" text-anchor="middle" fill="#1a1a1a">摆杆角速度(mrad/s)</text>
<text x="38.2" y="262" font-size="9.5" text-anchor="middle" fill="#6a6a6a" letter-spacing="-0.4">36.8</text>
<text x="70.7" y="262" font-size="9.5" text-anchor="middle" fill="#6a6a6a" letter-spacing="-0.4">42.8</text>
<text x="113.7" y="262" font-size="9.5" text-anchor="middle" fill="#6a6a6a" letter-spacing="-0.4">48.8</text>
<text x="155.7" y="262" font-size="9.5" text-anchor="middle" fill="#6a6a6a" letter-spacing="-0.4">54.8</text>
<text x="198.7" y="262" font-size="9.5" text-anchor="middle" fill="#6a6a6a" letter-spacing="-0.4">60.8</text>
<text x="284.7" y="262" font-size="9.5" text-anchor="middle" fill="#6a6a6a" letter-spacing="-0.4">72.8</text>
<text x="327.7" y="262" font-size="9.5" text-anchor="middle" fill="#6a6a6a" letter-spacing="-0.4">78.8</text>
<text x="369.7" y="262" font-size="9.5" text-anchor="middle" fill="#6a6a6a" letter-spacing="-0.4">84.8</text>
<text x="412.7" y="262" font-size="9.5" text-anchor="middle" fill="#6a6a6a" letter-spacing="-0.4">90.8</text>
<text x="436" y="262" font-size="9.5" fill="#6a6a6a" letter-spacing="-0.4">96.8</text>
<text x="446.5" y="262" font-size="9.5" fill="#6a6a6a" letter-spacing="-0.4">96.8</text>
<text x="241.2" y="274" font-size="9.33" text-anchor="middle" fill="#6a6a6a" letter-spacing="-0.2">Time</text>
<text transform="translate(22.8,44.2) rotate(-90)" font-size="9.33" text-anchor="end" fill="#ffa500" letter-spacing="-0.4">5000.0</text>
<text transform="translate(22.8,85.1) rotate(-90)" font-size="9.33" text-anchor="middle" fill="#ffa500" letter-spacing="-0.4">3000.0</text>
<text transform="translate(22.8,126.1) rotate(-90)" font-size="9.33" text-anchor="middle" fill="#ffa500" letter-spacing="-0.4">1000.0</text>
<text transform="translate(22.8,168.1) rotate(-90)" font-size="9.33" text-anchor="middle" fill="#ffa500" letter-spacing="-0.4">-1000.0</text>
<text transform="translate(22.8,209.1) rotate(-90)" font-size="9.33" text-anchor="middle" fill="#ffa500" letter-spacing="-0.4">-3000.0</text>
<text transform="translate(22.8,247.8) rotate(-90)" font-size="9.33" text-anchor="start" fill="#ffa500" letter-spacing="-0.4">-5000.0</text>
<text transform="translate(11.4,146.3) rotate(-90)" font-size="9.33" text-anchor="middle" fill="#ffa500">摆杆角速度( mrad/s)</text>

</svg></div>
<div class="abs" style="left:929px;top:78px;width:273px;height:1px;background:#fff"></div>
<div id="right" class="abs">
<div id="rhead" class="abs sim"><span class="abs" style="left:8px;top:4.5px;line-height:14px">名称</span><span class="abs" style="left:164px;top:0;width:1px;height:19px;background:#e5e5e5"></span><span class="abs" style="left:171px;top:4.5px;line-height:14px">值</span></div>
<div class="abs rrow sim" style="top:20px"><span class="a" style="background:#0078d7;color:#fff"><span class="c">摆臂角度</span>(mrad)</span><span class="v"></span><span class="b">-46.9696</span></div>
<div class="abs rrow sim" style="top:43px"><span class="a"><span class="c">摆杆角度</span>(mrad)</span><span class="v"></span><span class="b">0</span></div>
<div class="abs rrow sim" style="top:66px"><span class="a"><span class="c">摆臂角速度</span>(mrad/s)</span><span class="v"></span><span class="b">10.7174</span></div>
<div class="abs rrow sim" style="top:89px"><span class="a"><span class="c">摆杆角速度</span>(mrad/s)</span><span class="v"></span><span class="b">22</span></div>
</div>
<div id="log" class="abs">
<div id="lhead" class="abs sim"><span class="abs" style="left:0;top:1px;width:159px;height:17px;background:#bcdcf4"></span><span class="abs" style="left:5px;top:3.5px;line-height:14px">时间</span><span class="abs" style="left:165px;top:3.5px;line-height:14px">内容</span></div>
<div class="abs lrow sim" style="top:22px"><span class="t1">2024-05-16 09:56:05.822</span><span class="t2">udp bind port 8870 success.</span></div>
<div class="abs lrow sim" style="top:45px"><span class="t1">2024-05-16 09:56:05.822</span><span class="t2">udp bind port 6870 success.</span></div>
<div class="abs lrow sim" style="top:68px"><span class="t1">2024-05-16 09:56:05.823</span><span class="t2">set udp recv timeout success. 1 ms</span></div>
<div class="abs lrow sim" style="top:91px"><span class="t1">2024-05-16 09:56:05.823</span><span class="t2">set udp recv timeout success. 1 ms</span></div>
<div class="abs lrow sim" style="top:114px"><span class="t1">2024-05-16 09:56:05.823</span><span class="t2">set udp recv timeout success. 1 seconds</span></div>
<div class="abs lrow sim" style="top:137px"><span class="t1">2024-05-16 09:56:05.824</span><span class="t2">set udp recv timeout success. 1 seconds</span></div>
<div class="abs lrow sim" style="top:160px"><span class="t1">2024-05-16 09:56:08.159</span><span class="t2">Angle_Radian=-3141</span></div>
<div class="abs lrow sim" style="top:183px"><span class="t1">2024-05-16 09:56:09.130</span><span class="t2">Power reset OK</span></div>
<div class="abs lrow sim" style="top:206px"><span class="t1">2024-05-16 09:56:13.976</span><span class="t2"><span class="c">初始化完成，</span>Car_Pulse_Zero=130480, Angle_Pulse_Zero=0</span></div>
<div id="sb" class="abs"><svg class="abs" style="left:0;top:0" width="15" height="240" viewBox="0 0 15 240">
<rect x="0" y="169" width="15" height="53" fill="#cdcdcd"/>
<path d="M4 10.3L7.5 6.8L11 10.3" fill="none" stroke="#5a5a5a" stroke-width="2.1"/>
<path d="M4 228.7L7.5 232.2L11 228.7" fill="none" stroke="#5a5a5a" stroke-width="2.1"/>
</svg></div>
</div>
</body></html>
